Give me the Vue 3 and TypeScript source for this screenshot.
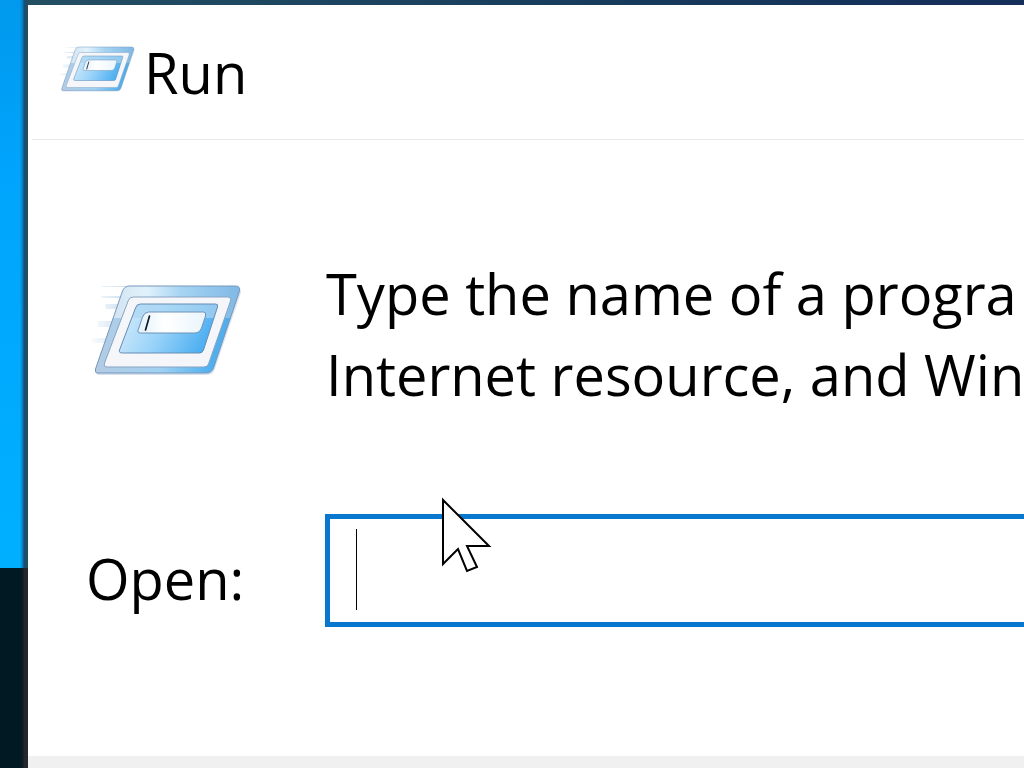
<script setup lang="ts">
import { ref } from 'vue'

const command = ref('')
const lines: string[] = ['Type the name of a progra', 'Internet resource, and Win']
</script>

<template>
  <div class="desktop">
    <svg class="defs" width="0" height="0" aria-hidden="true">
      <defs>
        <linearGradient id="frame" x1="0" y1="0" x2="1" y2="0">
          <stop offset="0" stop-color="#c9dbec" />
          <stop offset=".35" stop-color="#e2f2fc" />
          <stop offset=".6" stop-color="#a5d3f3" />
          <stop offset="1" stop-color="#80b9e5" />
        </linearGradient>
        <linearGradient id="lower" x1="0" y1="0" x2="1" y2="0">
          <stop offset="0" stop-color="#b3cbe3" />
          <stop offset=".45" stop-color="#a1d1f2" />
          <stop offset=".8" stop-color="#51b0ef" />
          <stop offset="1" stop-color="#55a9e5" />
        </linearGradient>
        <linearGradient id="inner" x1="0" y1="0" x2="1" y2="0">
          <stop offset="0" stop-color="#b9dcf4" />
          <stop offset=".5" stop-color="#a8d7f6" />
          <stop offset="1" stop-color="#91c8ef" />
        </linearGradient>
        <linearGradient id="shine" x1="0" y1="0" x2="1" y2=".2">
          <stop offset="0" stop-color="#d3ebfa" />
          <stop offset=".5" stop-color="#98d2f9" />
          <stop offset="1" stop-color="#4fb0f1" />
        </linearGradient>
        <linearGradient id="field" x1="0" y1="0" x2="1" y2="0">
          <stop offset="0" stop-color="#e2f2fc" />
          <stop offset=".4" stop-color="#fff" />
          <stop offset="1" stop-color="#e9f5fc" />
        </linearGradient>
        <linearGradient id="trail" gradientUnits="userSpaceOnUse" x1="8" y1="0" x2="48" y2="0">
          <stop offset="0" stop-color="#a9c8e3" stop-opacity="0" />
          <stop offset="1" stop-color="#a9c8e3" stop-opacity=".6" />
        </linearGradient>
        <clipPath id="lowerHalf"><path d="M0 48H180V120H0Z" /></clipPath>
        <symbol id="run" viewBox="9 10 155 100">
          <path d="M22 16H48V17H22ZM22 26H45V28H22ZM26 34H42V39H26ZM18 51H36V57H18ZM12 68H29V73H12ZM20 82H25V85H20ZM7 103H20V104H7Z" fill="url(#trail)" />
          <path d="M51 18H157Q163 18 161 24L135 100Q133 105 127 105H20Q15 105 17 100L44 23Q46 18 51 18Z" fill="#7597bd" opacity=".28" />
          <path d="M50 16H156Q161 16 160 21L134 98Q132 103 127 103H18Q15 103 16 99L43 21Q45 16 50 16Z" fill="url(#frame)" />
          <path d="M50 16H156Q161 16 160 21L134 98Q132 103 127 103H18Q15 103 16 99L43 21Q45 16 50 16Z" fill="url(#lower)" clip-path="url(#lowerHalf)" />
          <path d="M50 16H156Q161 16 160 21L134 98Q132 103 127 103H18Q15 103 16 99L43 21Q45 16 50 16Z" fill="none" stroke="#7698bd" stroke-width="1" />
          <path d="M54 27H148Q152 27 151 31L129 94Q128 97 124 97H28Q24 97 25 93L49 30Q50 27 54 27Z" fill="#f4f6fa" stroke="#88a4c3" stroke-width="1" />
          <path d="M61 34H136Q139 34 138 37L124 80Q123 83 120 83H43Q39 83 40 80L56 38Q57 34 61 34Z" fill="url(#inner)" />
          <path d="M52 48H134L124 80Q123 83 120 83H43Q39 83 40 80Z" fill="url(#shine)" />
          <path d="M61 34H136Q139 34 138 37L124 80Q123 83 120 83H43Q39 83 40 80L56 38Q57 34 61 34Z" fill="none" stroke="#668cb4" stroke-width="1" />
          <path d="M69 42H124Q127 42 126 46L122 58Q120 63 115 63H61Q57 63 59 59L63 47Q65 42 69 42Z" fill="url(#field)" stroke="#7192b5" stroke-width="1" />
          <path d="M70 46L66 60" stroke="#111b26" stroke-width="1.7" stroke-linecap="round" />
        </symbol>
      </defs>
    </svg>

    <div class="backdrop">
      <div class="wallpaper"></div>
      <div class="taskbar"></div>
    </div>

    <main class="window">
      <header class="titlebar">
        <svg class="small-icon" aria-hidden="true"><use href="#run" /></svg>
        <h1>Run</h1>
      </header>

      <section class="intro">
        <svg class="large-icon" aria-hidden="true"><use href="#run" /></svg>
        <p><span v-for="line in lines" :key="line">{{ line }}</span></p>
      </section>

      <form class="open-row" @submit.prevent>
        <label for="command">Open:</label>
        <div class="field">
          <input id="command" v-model="command" type="text" autocomplete="off" />
          <span v-if="!command" class="caret"></span>
          <svg class="pointer" viewBox="0 0 52 78" aria-hidden="true">
            <path d="M3 3V67L18 52L27 74L37 70L27 49H49Z" fill="#fff" stroke="#000" stroke-width="2" />
          </svg>
        </div>
      </form>

      <footer></footer>
    </main>
  </div>
</template>

<style>
body {
  margin: 0;
}
</style>

<style scoped>
.desktop {
  display: grid;
  grid-template-columns: 28px minmax(0, 1fr);
  height: 100vh;
  overflow: hidden;
  color: #000;
  font-family: "Segoe UI", "Open Sans", "Noto Sans", sans-serif;
  font-size: 56px;
  line-height: 81px;
}

.defs {
  position: absolute;
}

.backdrop {
  display: flex;
  flex-direction: column;
}

.wallpaper {
  flex: 1;
  background:
    linear-gradient(90deg, transparent 20px, #0878b5 23px, #174f70 24px, #254c62 28px),
    linear-gradient(#0099ed, #00a4fc 30%, #00b0ff);
}

.taskbar {
  height: 200px;
  background: linear-gradient(90deg, #001923 20px, #101c22 23px, #242729 24px);
}

.window {
  display: flex;
  flex-direction: column;
  min-width: 0;
  overflow: hidden;
  background: #fff;
}

.titlebar {
  display: flex;
  align-items: center;
  gap: 8px;
  height: 134px;
  flex: none;
  margin-left: 4px;
  padding-left: 26px;
  border-bottom: 1px solid #e9e9e9;
}

.window::before {
  content: "";
  flex: none;
  height: 5px;
  background: linear-gradient(90deg, #234f63, #173a5b 60%, #142d59);
}

h1 {
  margin: 0;
  font-size: inherit;
  font-weight: 400;
}

.small-icon {
  width: 78px;
  height: 50px;
  margin-bottom: 6px;
}

.intro {
  display: flex;
  align-items: flex-start;
  padding: 113px 0 0 60px;
}

.large-icon {
  flex: none;
  width: 156px;
  height: 100px;
  margin-top: 27px;
}

.intro p {
  margin: 0 0 0 82px;
  white-space: nowrap;
}

.intro p span {
  display: block;
}

.open-row {
  display: flex;
  align-items: center;
  padding: 99px 0 129px 58px;
}

label {
  flex: none;
  width: 239px;
  padding-top: 16px;
}

.field {
  position: relative;
  flex: 1;
  min-width: 0;
}

input {
  display: block;
  box-sizing: border-box;
  width: 100%;
  height: 113px;
  padding: 0 26px;
  border: 5px solid #0878cf;
  border-right: 0;
  border-radius: 0;
  outline: none;
  background: #fff;
  color: inherit;
  font: inherit;
}

.caret {
  position: absolute;
  top: 15px;
  left: 31px;
  width: 1px;
  height: 81px;
  background: #000;
}

.pointer {
  position: absolute;
  top: -17px;
  left: 115px;
  width: 52px;
  height: 78px;
}

footer {
  flex: 1;
  background: #f0f0f0;
}
</style>
